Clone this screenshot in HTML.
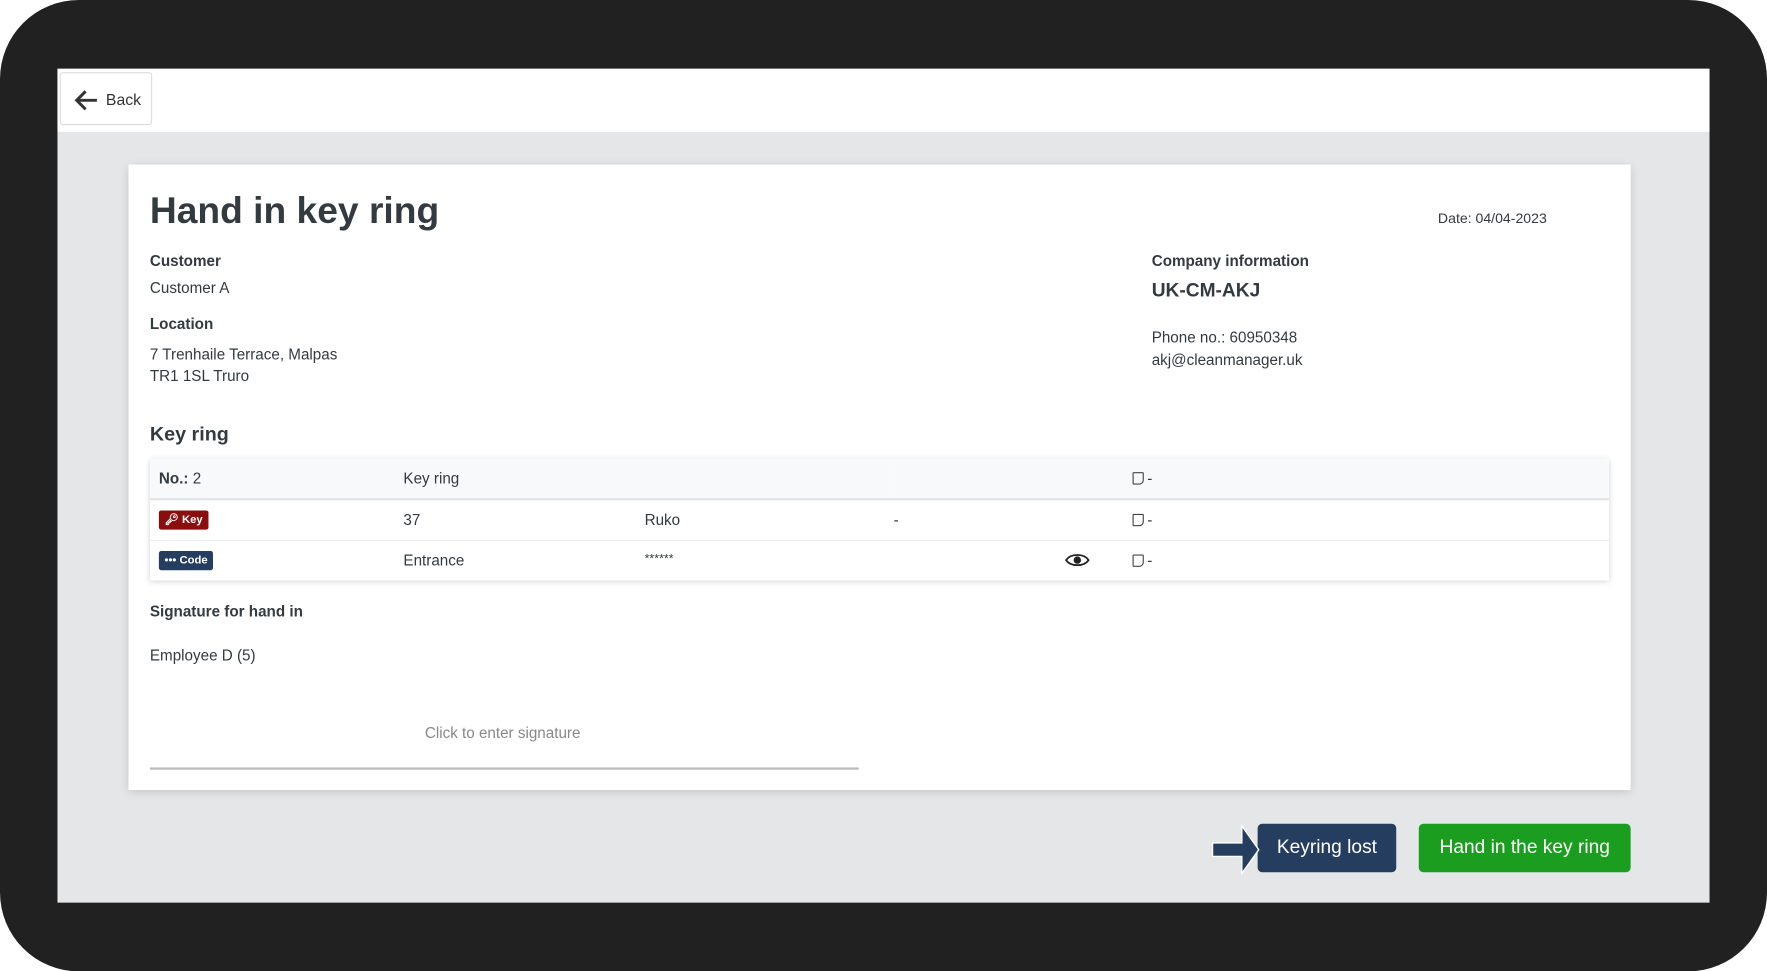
<!DOCTYPE html>
<html><head><style>
*{margin:0;padding:0;box-sizing:border-box}
html,body{width:1767px;height:971px;overflow:hidden;background:#fff;font-family:"Liberation Sans",Arial,sans-serif}
#w{width:1568px;height:862px;transform:scale(1.12691);transform-origin:0 0;position:relative}
.frame{position:absolute;left:0;top:0;width:1568px;height:862px;background:#222122;border-radius:70px}
.scr{position:absolute;left:51px;top:61px;width:1466px;height:740px;background:#e5e6e8}
.hdr{position:absolute;left:0;top:0;width:1466px;height:56px;background:#fff}
.back{position:absolute;left:2px;top:3px;width:82px;height:47px;border:1px solid #dcdcdc;border-radius:3px;background:#fff;font-size:14px;color:#333;padding:15px 0 0 40px}
.back svg{position:absolute;left:12px;top:14px}
.card{position:absolute;left:63px;top:85px;width:1333px;height:555px;background:#fff;box-shadow:0 2px 8px rgba(0,0,0,.15)}
.a{position:absolute;color:#333a40;white-space:nowrap}
.b{font-weight:bold}
.t{font-size:13.5px}
table{position:absolute;left:19px;top:261px;width:1295px;border-collapse:collapse;box-shadow:0 1px 5px rgba(0,0,0,.18);font-size:13.5px;color:#333a40;table-layout:fixed}
td{height:36px;padding:0;position:relative}
tr.h td{background:#f8f9fa;border-bottom:2px solid #e3e4e6}
tr.r1 td{border-bottom:1px solid #eceef0}
.badge{display:inline-block;color:#fff;font-size:10px;font-weight:bold;padding:3px 5px;border-radius:2px}
.note{display:inline-block;width:10px;height:11px;border:1.4px solid #444;border-radius:1px 1px 4px 1px;vertical-align:-1px;margin-right:3px}
.btn{position:absolute;top:670px;height:43px;border-radius:4px;color:#fff;font-size:17px;text-align:center;line-height:42px}
</style></head><body><div id="w">
<div class="frame"></div>
<div class="scr">
 <div class="hdr"><div class="back"><svg width="22" height="20" viewBox="0 0 22 20"><path d="M20 10H3M10 2L2 10l8 8" stroke="#333" stroke-width="2.6" fill="none"/></svg>Back</div></div>
 <div class="card">
  <div class="a b" style="left:19px;top:22px;font-size:33px">Hand in key ring</div>
  <div class="a" style="left:1162px;top:41px;font-size:12.5px">Date: 04/04-2023</div>
  <div class="a b t" style="left:19px;top:78px">Customer</div>
  <div class="a t" style="left:19px;top:102px">Customer A</div>
  <div class="a b t" style="left:19px;top:134px">Location</div>
  <div class="a t" style="left:19px;top:159px;line-height:19px">7 Trenhaile Terrace, Malpas<br>TR1 1SL Truro</div>
  <div class="a b t" style="left:908px;top:78px">Company information</div>
  <div class="a b" style="left:908px;top:102px;font-size:17px">UK-CM-AKJ</div>
  <div class="a t" style="left:908px;top:144px;line-height:19.5px">Phone no.: 60950348<br>akj@cleanmanager.uk</div>
  <div class="a b" style="left:19px;top:229px;font-size:17.5px">Key ring</div>
  <table>
   <colgroup><col style="width:225px"><col style="width:214px"><col style="width:221px"><col style="width:212px"><col></colgroup>
   <tr class="h"><td style="padding-left:8px"><b>No.:</b> 2</td><td>Key ring</td><td></td><td></td><td><span class="note"></span>-</td></tr>
   <tr class="r1"><td style="padding-left:8px"><span class="badge" style="background:#8b0e0e">&#x1F511;&#xFE0E; Key</span></td><td>37</td><td>Ruko</td><td>-</td><td><span class="note"></span>-</td></tr>
   <tr><td style="padding-left:8px"><span class="badge" style="background:#253e60">••• Code</span></td><td>Entrance</td><td style="font-size:11px;vertical-align:top;padding-top:10px">******</td><td><svg width="22" height="14" viewBox="0 0 22 14" style="position:absolute;left:152px;top:10px"><path d="M1 7C5 1 17 1 21 7C17 13 5 13 1 7Z" fill="none" stroke="#222" stroke-width="1.6"/><circle cx="11" cy="7" r="3.3" fill="#222"/></svg></td><td><span class="note"></span>-</td></tr>
  </table>
  <div class="a b t" style="left:19px;top:389px">Signature for hand in</div>
  <div class="a t" style="left:19px;top:428px">Employee D (5)</div>
  <div class="a t" style="left:263px;top:497px;color:#888">Click to enter signature</div>
  <div style="position:absolute;left:19px;top:535px;width:629px;height:2px;background:#bbb"></div>
 </div>
 <div class="btn" style="left:1065px;width:123px;background:#253e60">Keyring lost</div>
 <div class="btn" style="left:1208px;width:188px;background:#1b9e20">Hand in the key ring</div>
 <svg style="position:absolute;left:1024px;top:670px" width="54" height="46" viewBox="0 0 54 46"><path d="M1 17H27V2L42 23L27 44V29H1Z" fill="#253e60" stroke="#fff" stroke-width="1.2"/></svg>
</div>
</div></body></html>
